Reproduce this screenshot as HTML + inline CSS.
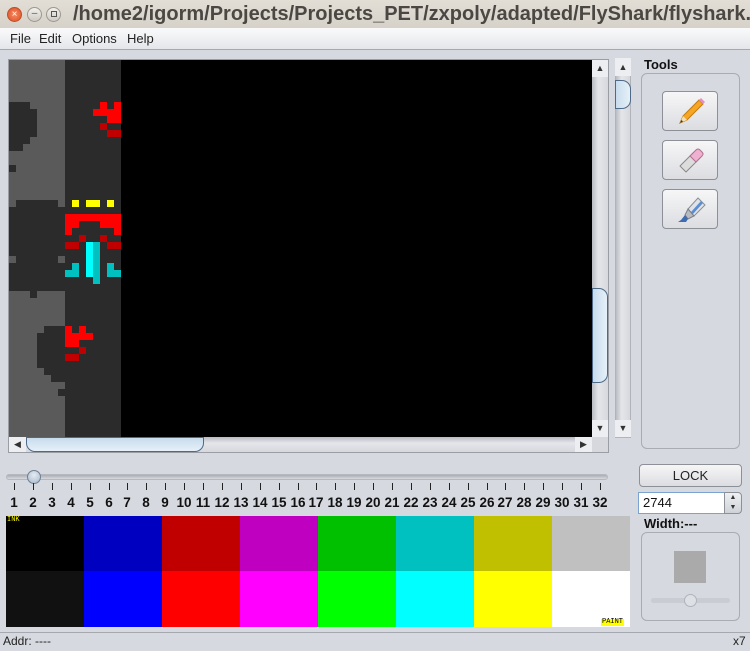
<!DOCTYPE html>
<html><head><meta charset="utf-8"><style>
*{margin:0;padding:0;box-sizing:border-box}
html,body{overflow:hidden}
body{width:750px;height:651px;overflow:hidden;background:#d6d9e0;font-family:"Liberation Sans","DejaVu Sans",sans-serif;position:relative}
.a{position:absolute}
.c{position:absolute;width:7px;height:7px}
.R{background:#ff0000}.D{background:#c00000}.Y{background:#ffff00}.C{background:#00ffff}.K{background:#00c0c0}.G{background:#2b2b2b}.L{background:#5a5a5a}
.btn{position:absolute;border:1px solid #8d9096;border-radius:4px;background:linear-gradient(#f6f6f7,#dcdde1)}
.tick{position:absolute;top:483px;width:1px;height:7px;background:#222}
.num{position:absolute;top:495px;font-size:13.5px;font-weight:bold;color:#111;width:20px;text-align:center}
.sb{background:linear-gradient(90deg,#b9bcc3,#e4e6ea 40%,#d6d8dd)}
</style></head><body>
<div class="a" style="left:0;top:0;width:750px;height:28px;background:linear-gradient(#e2ded6,#d6d2c9)"></div>
<div class="a" style="left:7px;top:7px;width:15px;height:15px;border-radius:50%;background:radial-gradient(#f58a64,#df4f22);border:1px solid #b8502c;color:#fff;font-size:10px;line-height:13px;text-align:center">×</div>
<div class="a" style="left:27px;top:7px;width:15px;height:15px;border-radius:50%;background:linear-gradient(#f2f0ec,#cfcbc3);border:1px solid #9c988f;font-size:10px;line-height:12px;text-align:center;color:#555">–</div>
<div class="a" style="left:46px;top:7px;width:15px;height:15px;border-radius:50%;background:linear-gradient(#f2f0ec,#cfcbc3);border:1px solid #9c988f"></div>
<div class="a" style="left:51px;top:11px;width:6px;height:6px;border:1px solid #555"></div>
<div class="a" style="left:73px;top:3px;width:677px;height:25px;overflow:hidden;white-space:nowrap;font-size:20px;font-weight:bold;color:#4b4843">/home2/igorm/Projects/Projects_PET/zxpoly/adapted/FlyShark/flyshark.s</div>
<div class="a" style="left:0;top:28px;width:750px;height:22px;background:linear-gradient(#fafafb,#e4e6ea);border-bottom:1px solid #a5a8ae"></div>
<div class="a" style="left:10px;top:31px;font-size:13px;color:#222">File</div>
<div class="a" style="left:39px;top:31px;font-size:13px;color:#222">Edit</div>
<div class="a" style="left:72px;top:31px;font-size:13px;color:#222">Options</div>
<div class="a" style="left:127px;top:31px;font-size:13px;color:#222">Help</div>
<div class="a" style="left:8px;top:59px;width:601px;height:394px;border:1px solid #9a9da4;background:#d6d8dd"></div>
<div class="a" style="left:9px;top:60px;width:583px;height:377px;background:#000;overflow:hidden">
<div class="a L" style="left:0;top:0;width:56px;height:377px"></div>
<div class="a G" style="left:56px;top:0;width:56px;height:377px"></div>
<div class="a" style="left:0;top:0">
<div class="a G" style="left:0;top:42px;width:21px;height:7px"></div>
<div class="a G" style="left:0;top:49px;width:28px;height:28px"></div>
<div class="a G" style="left:0;top:77px;width:21px;height:7px"></div>
<div class="a G" style="left:0;top:84px;width:14px;height:7px"></div>
<div class="a G" style="left:0;top:105px;width:7px;height:7px"></div>
<div class="a G" style="left:7px;top:140px;width:42px;height:7px"></div>
<div class="a G" style="left:0;top:147px;width:56px;height:84px"></div>
<div class="a L" style="left:0;top:196px;width:7px;height:7px"></div>
<div class="a L" style="left:49px;top:196px;width:7px;height:7px"></div>
<div class="a G" style="left:21px;top:231px;width:7px;height:7px"></div>
<div class="a G" style="left:35px;top:266px;width:21px;height:7px"></div>
<div class="a G" style="left:28px;top:273px;width:28px;height:35px"></div>
<div class="a G" style="left:35px;top:308px;width:21px;height:7px"></div>
<div class="a G" style="left:42px;top:315px;width:14px;height:7px"></div>
<div class="a G" style="left:49px;top:329px;width:7px;height:7px"></div>
<div class="c R" style="left:91px;top:42px"></div><div class="c R" style="left:105px;top:42px"></div>
<div class="a R" style="left:84px;top:49px;width:28px;height:7px"></div>
<div class="a R" style="left:98px;top:56px;width:14px;height:7px"></div>
<div class="c D" style="left:91px;top:63px"></div>
<div class="a D" style="left:98px;top:70px;width:14px;height:7px"></div>
<div class="c Y" style="left:63px;top:140px"></div>
<div class="a Y" style="left:77px;top:140px;width:14px;height:7px"></div>
<div class="c Y" style="left:98px;top:140px"></div>
<div class="a R" style="left:56px;top:154px;width:56px;height:7px"></div>
<div class="a R" style="left:56px;top:161px;width:14px;height:7px"></div>
<div class="a R" style="left:91px;top:161px;width:21px;height:7px"></div>
<div class="c R" style="left:56px;top:168px"></div><div class="c R" style="left:105px;top:168px"></div>
<div class="c D" style="left:70px;top:175px"></div><div class="c D" style="left:91px;top:175px"></div>
<div class="a D" style="left:56px;top:182px;width:14px;height:7px"></div>
<div class="a D" style="left:98px;top:182px;width:14px;height:7px"></div>
<div class="a C" style="left:77px;top:182px;width:7px;height:35px"></div>
<div class="a K" style="left:84px;top:182px;width:7px;height:42px"></div>
<div class="c K" style="left:63px;top:203px"></div><div class="c K" style="left:98px;top:203px"></div>
<div class="a K" style="left:56px;top:210px;width:14px;height:7px"></div>
<div class="a K" style="left:98px;top:210px;width:14px;height:7px"></div>
<div class="c R" style="left:56px;top:266px"></div><div class="c R" style="left:70px;top:266px"></div>
<div class="a R" style="left:56px;top:273px;width:28px;height:7px"></div>
<div class="a R" style="left:56px;top:280px;width:14px;height:7px"></div>
<div class="c D" style="left:70px;top:287px"></div>
<div class="a D" style="left:56px;top:294px;width:14px;height:7px"></div>
</div>
</div>
<div class="a sb" style="left:592px;top:60px;width:16px;height:377px"></div>
<div class="a" style="left:592px;top:60px;width:16px;height:17px;background:#eceef1;font-size:9px;text-align:center;line-height:17px;color:#333">▲</div>
<div class="a" style="left:592px;top:288px;width:16px;height:95px;border:1px solid #4e6a86;border-radius:0 9px 9px 0;background:linear-gradient(90deg,#c8dcee,#e6f0f8)"></div>
<div class="a" style="left:592px;top:420px;width:16px;height:17px;background:#eceef1;font-size:9px;text-align:center;line-height:17px;color:#333">▼</div>
<div class="a" style="left:9px;top:437px;width:583px;height:15px;background:linear-gradient(#b9bcc3,#e4e6ea 40%,#d6d8dd)"></div>
<div class="a" style="left:9px;top:437px;width:17px;height:15px;background:#eceef1;font-size:9px;line-height:15px;text-align:center;color:#333">◀</div>
<div class="a" style="left:26px;top:437px;width:178px;height:15px;border:1px solid #4e6a86;border-radius:0 0 9px 9px;background:linear-gradient(#c8dcee,#e6f0f8)"></div>
<div class="a" style="left:575px;top:437px;width:17px;height:15px;background:#eceef1;font-size:9px;line-height:15px;text-align:center;color:#333">▶</div>
<div class="a sb" style="left:615px;top:58px;width:16px;height:380px;border:1px solid #b0b3b9"></div>
<div class="a" style="left:615px;top:58px;width:16px;height:18px;background:#eceef1;font-size:9px;text-align:center;line-height:18px;color:#333">▲</div>
<div class="a" style="left:615px;top:80px;width:16px;height:29px;border:1px solid #4e6a86;border-radius:0 9px 9px 0;background:linear-gradient(90deg,#c8dcee,#e6f0f8)"></div>
<div class="a" style="left:615px;top:420px;width:16px;height:17px;background:#eceef1;font-size:9px;text-align:center;line-height:17px;color:#333">▼</div>
<div class="a" style="left:644px;top:57px;font-size:13px;font-weight:bold;color:#111">Tools</div>
<div class="a" style="left:641px;top:73px;width:99px;height:376px;border:1px solid #a9acb2;border-radius:6px;background:#d6d9e0"></div>
<div class="btn" style="left:662px;top:91px;width:56px;height:40px"></div>
<svg class="a" style="left:674px;top:94px" width="34" height="34" viewBox="0 0 34 34"><path d="M6 29 L9 22 L25 6 L29 10 L13 26 Z" fill="#f5a623" stroke="#c27a10" stroke-width="1"/><path d="M25 6 L27 4 L31 8 L29 10 Z" fill="#e58fc6"/><path d="M6 29 L9 22 L13 26 Z" fill="#f3deb5"/><path d="M6 29 L7.5 26 L9 27.5Z" fill="#333"/></svg>
<div class="btn" style="left:662px;top:140px;width:56px;height:40px"></div>
<svg class="a" style="left:674px;top:143px" width="34" height="34" viewBox="0 0 34 34"><path d="M6 23 L20 9 L26 15 L12 29 Z" fill="#dcdcdc" stroke="#888" stroke-width="1" stroke-linejoin="round"/><path d="M16 13 L22 7 Q24 5 26 7 L28 9 Q30 11 28 13 L22 19 Z" fill="#f0b0d0" stroke="#b07090" stroke-width="1"/></svg>
<div class="btn" style="left:662px;top:189px;width:56px;height:40px"></div>
<svg class="a" style="left:674px;top:192px" width="34" height="34" viewBox="0 0 34 34"><path d="M14 17 L24 6 L31 13 L20 24 Z" fill="#dfe3e8" stroke="#8a8f96"/><path d="M17 20 L27 9 L29 11 L19 22Z" fill="#5a8ed0"/><path d="M14 17 L20 24 L14 27 L11 23Z" fill="#b7bcc3" stroke="#7a7f86"/><path d="M11 23 L7 28 L4 30 L12 30 L14 27Z" fill="#3e6cb0"/></svg>
<div class="a" style="left:6px;top:474px;width:602px;height:6px;border-radius:3px;background:linear-gradient(#a9acb2,#d8dadf);border:1px solid #b5b8be"></div>
<div class="a" style="left:27px;top:470px;width:14px;height:14px;border-radius:50%;border:1px solid #6f7f92;background:radial-gradient(circle at 50% 35%,#e4ebf3,#a6b7ca)"></div>
<div class="btn" style="left:639px;top:464px;width:103px;height:23px;font-size:13px;text-align:center;line-height:21px;color:#222">LOCK</div>
<div class="a" style="left:638px;top:492px;width:87px;height:22px;border:1px solid #7aa3cf;background:#fff;font-size:13px;padding-left:4px;line-height:20px;color:#111">2744</div>
<div class="a" style="left:724px;top:492px;width:18px;height:22px;border:1px solid #8d9096;border-radius:0 4px 4px 0;background:linear-gradient(#eef0f2,#cfd2d7);font-size:7px;text-align:center;line-height:10px;color:#333">▲<br>▼</div>
<div class="a" style="left:644px;top:516px;font-size:13px;font-weight:bold;color:#111">Width:---</div>
<div class="a" style="left:641px;top:532px;width:99px;height:89px;border:1px solid #a9acb2;border-radius:6px;background:#d6d9e0"></div>
<div class="a" style="left:674px;top:551px;width:32px;height:32px;background:#aaaaaa"></div>
<div class="a" style="left:651px;top:598px;width:79px;height:5px;border-radius:3px;background:#c9ccd2"></div>
<div class="a" style="left:684px;top:594px;width:13px;height:13px;border-radius:50%;border:1px solid #b0b3b9;background:#dde0e5"></div>
<div class="a" style="left:6px;top:516px;width:624px;height:111px">
<div class="a" style="left:0;top:0;width:78px;height:55px;background:#000"></div>
<div class="a" style="left:78px;top:0;width:78px;height:55px;background:#0000c0"></div>
<div class="a" style="left:156px;top:0;width:78px;height:55px;background:#c00000"></div>
<div class="a" style="left:234px;top:0;width:78px;height:55px;background:#c000c0"></div>
<div class="a" style="left:312px;top:0;width:78px;height:55px;background:#00c000"></div>
<div class="a" style="left:390px;top:0;width:78px;height:55px;background:#00c0c0"></div>
<div class="a" style="left:468px;top:0;width:78px;height:55px;background:#c0c000"></div>
<div class="a" style="left:546px;top:0;width:78px;height:55px;background:#c0c0c0"></div>
<div class="a" style="left:0;top:55px;width:78px;height:56px;background:#111"></div>
<div class="a" style="left:78px;top:55px;width:78px;height:56px;background:#0000ff"></div>
<div class="a" style="left:156px;top:55px;width:78px;height:56px;background:#ff0000"></div>
<div class="a" style="left:234px;top:55px;width:78px;height:56px;background:#ff00ff"></div>
<div class="a" style="left:312px;top:55px;width:78px;height:56px;background:#00ff00"></div>
<div class="a" style="left:390px;top:55px;width:78px;height:56px;background:#00ffff"></div>
<div class="a" style="left:468px;top:55px;width:78px;height:56px;background:#ffff00"></div>
<div class="a" style="left:546px;top:55px;width:78px;height:56px;background:#fff"></div>
<div class="a" style="left:1px;top:0;font-size:7px;color:#ffff00;font-family:'Liberation Mono',monospace;line-height:8px">INK</div>
<div class="a" style="left:595px;top:103px;font-size:7px;color:#000;background:#ffff00;font-family:'Liberation Mono',monospace;line-height:7px;padding:0 1px">PAINT</div>
</div>
<div class="a" style="left:0;top:632px;width:750px;height:19px;border-top:1px solid #a5a8ae;background:#d6d9e0"></div>
<div class="a" style="left:3px;top:634px;font-size:12px;color:#222">Addr: ----</div>
<div class="a" style="left:733px;top:634px;font-size:12px;color:#222">x7</div>
<div class="a" style="left:0;top:0;width:750px;height:651px;overflow:hidden">
<div class="tick" style="left:14px"></div><div class="tick" style="left:33px"></div><div class="tick" style="left:52px"></div><div class="tick" style="left:71px"></div><div class="tick" style="left:90px"></div><div class="tick" style="left:109px"></div><div class="tick" style="left:127px"></div><div class="tick" style="left:146px"></div><div class="tick" style="left:165px"></div><div class="tick" style="left:184px"></div><div class="tick" style="left:203px"></div><div class="tick" style="left:222px"></div><div class="tick" style="left:241px"></div><div class="tick" style="left:260px"></div><div class="tick" style="left:279px"></div><div class="tick" style="left:298px"></div><div class="tick" style="left:316px"></div><div class="tick" style="left:335px"></div><div class="tick" style="left:354px"></div><div class="tick" style="left:373px"></div><div class="tick" style="left:392px"></div><div class="tick" style="left:411px"></div><div class="tick" style="left:430px"></div><div class="tick" style="left:449px"></div><div class="tick" style="left:468px"></div><div class="tick" style="left:487px"></div><div class="tick" style="left:505px"></div><div class="tick" style="left:524px"></div><div class="tick" style="left:543px"></div><div class="tick" style="left:562px"></div><div class="tick" style="left:581px"></div><div class="tick" style="left:600px"></div>
<div class="num" style="left:4px">1</div><div class="num" style="left:23px">2</div><div class="num" style="left:42px">3</div><div class="num" style="left:61px">4</div><div class="num" style="left:80px">5</div><div class="num" style="left:99px">6</div><div class="num" style="left:117px">7</div><div class="num" style="left:136px">8</div><div class="num" style="left:155px">9</div><div class="num" style="left:174px">10</div><div class="num" style="left:193px">11</div><div class="num" style="left:212px">12</div><div class="num" style="left:231px">13</div><div class="num" style="left:250px">14</div><div class="num" style="left:269px">15</div><div class="num" style="left:288px">16</div><div class="num" style="left:306px">17</div><div class="num" style="left:325px">18</div><div class="num" style="left:344px">19</div><div class="num" style="left:363px">20</div><div class="num" style="left:382px">21</div><div class="num" style="left:401px">22</div><div class="num" style="left:420px">23</div><div class="num" style="left:439px">24</div><div class="num" style="left:458px">25</div><div class="num" style="left:477px">26</div><div class="num" style="left:495px">27</div><div class="num" style="left:514px">28</div><div class="num" style="left:533px">29</div><div class="num" style="left:552px">30</div><div class="num" style="left:571px">31</div><div class="num" style="left:590px">32</div>
</div>
</body></html>
